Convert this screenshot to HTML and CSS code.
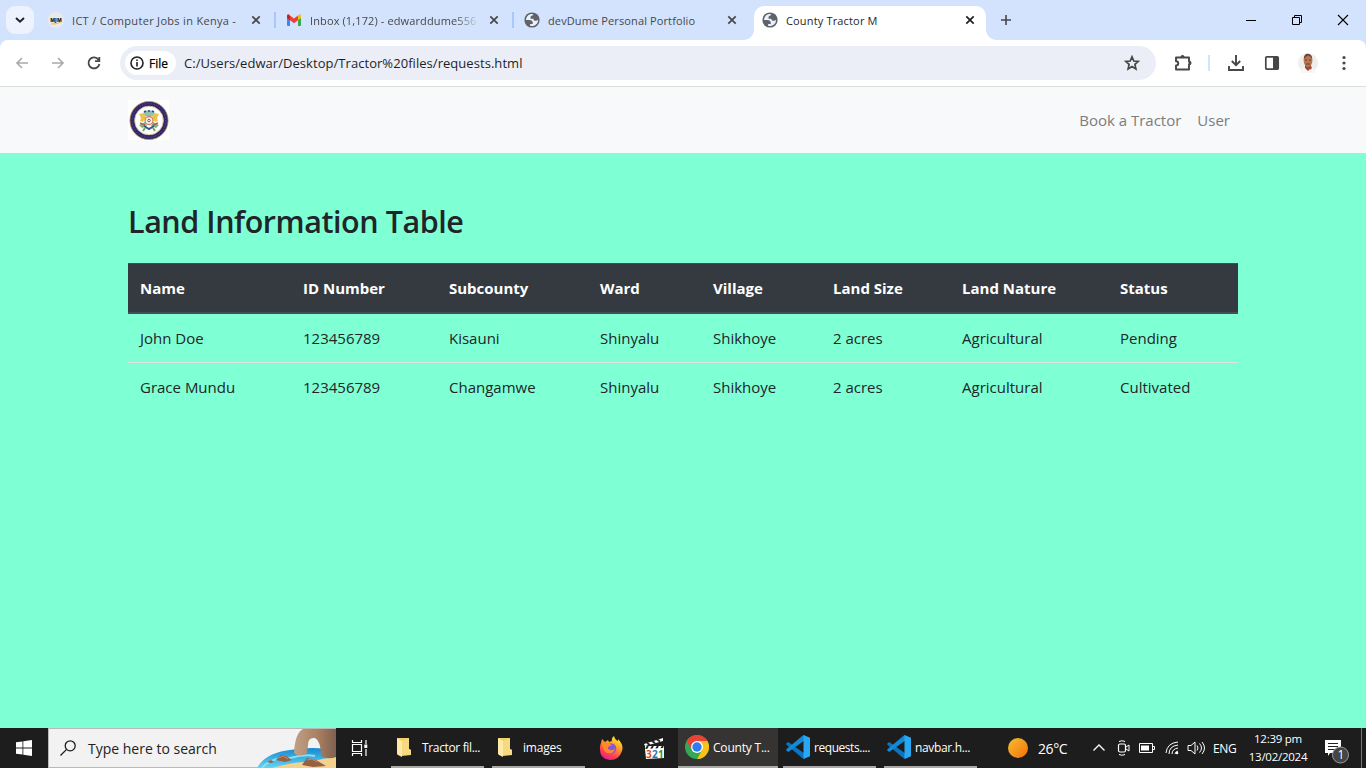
FILE: index.html
```
<!DOCTYPE html>
<html lang="en">
<head>
<meta charset="utf-8">
<title>County Tractor M</title>
<link rel="stylesheet" href="styles.css">
</head>
<body>
<svg class="defs" width="0" height="0">
  <defs>
    <symbol id="close" viewBox="0 0 10 10"><path d="M1.3 1.3l7.4 7.4M8.7 1.3L1.3 8.7" fill="none" stroke="currentColor" stroke-width="1.7"/></symbol>
    <symbol id="globe" viewBox="1.500 1.500 21 21"><circle cx="12" cy="12" r="10" fill="#5f6368"/><path d="M4 12h4.400c3.407.022 4.922 1.730 4.543 5.127H9.488v2.470a8.004 8.004 0 0 0 10.498-8.083C19.327 12.504 18.332 13 17 13c-2.137 0-3.206-.916-3.206-2.750h-3.748c-.274-2.728.683-4.092 2.870-4.092 0-.975.327-1.597.811-1.970A8.004 8.004 0 0 0 4 12z" fill="#e8f0fe"/></symbol>
    <symbol id="folder" viewBox="0 0 16 22"><path d="M1 2h12v11l2 1v5l-9 1z" fill="#f3cf6c"/><path d="M1 2l5 3v16l-4-2-1-1z" fill="#ffe9a6"/><path d="M6 5l7-3v11l2 1v5H6z" fill="#f7d97f"/></symbol>
    <symbol id="code" viewBox="0 0 24 24"><path d="M.3 8.600L2.200 7 18.500 18.500V24l-2-.7L.4 9.800z" fill="#0b74c2"/><path d="M.3 15.400L2.200 17 18.500 5.500V0l-2 .7L.4 14.200z" fill="#138ad8"/><path d="M17.500 0L24 2.800v18.400L17.500 24z" fill="#2aa7f3"/></symbol>
  </defs>
</svg>

<header class="tabs">
  <div class="search-tabs"><svg width="12" height="8" viewBox="0 0 12 8"><path d="M2 2l4 3.700L10 2" fill="none" stroke="#202124" stroke-width="2"/></svg></div>
  <div class="tab">
    <svg width="16" height="16" viewBox="0 0 16 16"><circle cx="8" cy="8" r="8" fill="#e9e9ea"/><text x="8" y="9.500" class="mjm">MJM</text><path d="M3 12q5 .5 10-2" stroke="#f2b455" fill="none"/></svg>
    <span class="title t1">ICT / Computer Jobs in Kenya -</span>
    <svg class="x" width="10" height="10"><use href="#close"/></svg>
  </div>
  <div class="tab split">
    <svg width="16" height="16" viewBox="0 0 16 16"><path d="M1 4h3v10H2q-1 0-1-1z" fill="#4285f4"/><path d="M12 4h3v9q0 1-1 1h-2z" fill="#34a853"/><path d="M12 3.500l1-1q2-.8 2 1.500v2l-3 2.300z" fill="#fbbc04"/><path d="M4 3.600l4 3 4-3v4.600l-4 3-4-3z" fill="#ea4335"/><path d="M1 6V4q0-2.300 2-1.500l1 1.100v4.600z" fill="#c5221f"/></svg>
    <span class="title t2">Inbox (1,172) - edwarddume556</span>
    <svg class="x" width="10" height="10"><use href="#close"/></svg>
  </div>
  <div class="tab split">
    <svg width="16" height="16"><use href="#globe"/></svg>
    <span class="title t3">devDume Personal Portfolio</span>
    <svg class="x" width="10" height="10"><use href="#close"/></svg>
  </div>
  <div class="tab active">
    <svg width="16" height="16"><use href="#globe"/></svg>
    <span class="title t4">County Tractor M</span>
    <svg class="x" width="10" height="10"><use href="#close"/></svg>
  </div>
  <svg class="plus" width="12" height="12" viewBox="0 0 12 12"><path d="M6 1v10M1 6h10" stroke="#474747" stroke-width="1.600"/></svg>
  <div class="win">
    <svg width="12" height="12" viewBox="0 0 12 12"><path d="M1 6.500h10" stroke="#000"/></svg>
    <svg width="12" height="12" viewBox="0 0 12 12"><path d="M1.500 3.500h7v7h-7zM3.500 3V1.500h7v7H9" fill="none" stroke="#000"/></svg>
    <svg width="12" height="12" viewBox="0 0 12 12"><path d="M1 1l10 10M11 1L1 11" stroke="#000" stroke-width="1.100"/></svg>
  </div>
</header>

<div class="toolbar">
  <svg class="tool" width="16" height="16" viewBox="0 0 16 16"><path d="M14 8H3M8 3L3 8l5 5" fill="none" stroke="#a9a9a9" stroke-width="1.600"/></svg>
  <svg class="tool" width="16" height="16" viewBox="0 0 16 16"><path d="M2 8h11M8 3l5 5-5 5" fill="none" stroke="#a9a9a9" stroke-width="1.600"/></svg>
  <svg class="tool" width="16" height="16" viewBox="0 0 16 16"><path d="M12.500 4.700A5.500 5.500 0 1 0 13.400 9M13.300 2v4.200H9" fill="none" stroke="#474747" stroke-width="1.800"/></svg>
  <div class="address">
    <div class="chip"><svg width="14" height="14" viewBox="0 0 14 14"><circle cx="7" cy="7" r="6" fill="none" stroke="#202124" stroke-width="1.600"/><path d="M7 6v4.500M7 3.500v1.600" stroke="#202124" stroke-width="1.600"/></svg><span>File</span></div>
    <span class="url">C:/Users/edwar/Desktop/Tractor%20files/requests.html</span>
    <svg class="star" width="16" height="16" viewBox="0 0 16 16"><path d="M8 1.800l1.800 4.200 4.500.4-3.400 3 1 4.500L8 11.500l-3.900 2.400 1-4.500-3.400-3 4.500-.4z" fill="none" stroke="#474747" stroke-width="1.700"/></svg>
  </div>
  <div class="actions">
    <svg width="18" height="18" viewBox="0 0 18 18"><path d="M2 3.500h13v4.200c2 0 2 2.600 0 2.600v5.200H2v-4c3 0 3-4.200 0-4.200z" fill="none" stroke="#474747" stroke-width="1.900" stroke-linejoin="round"/><path d="M6.500 3a2 2 0 0 1 4 0zM15 7c3 0 3 4 0 4z" fill="#474747"/></svg>
    <i class="bar"></i>
    <svg width="18" height="18" viewBox="0 0 18 18"><path d="M9 1v10M4.800 7L9 11.200 13.200 7M2 12v4h14v-4" fill="none" stroke="#474747" stroke-width="1.900"/></svg>
    <svg class="panel" width="16" height="16" viewBox="0 0 16 16"><rect x="1.800" y="1.800" width="12.400" height="12.400" rx="1" fill="none" stroke="#474747" stroke-width="1.700"/><path d="M9 2h5v12H9z" fill="#474747"/></svg>
    <svg class="avatar" width="20" height="20" viewBox="0 0 20 20"><circle cx="10" cy="10" r="10" fill="#eeeeed"/><path d="M2 20q1-5 6-6h4q5 1 6 6z" fill="#f8f7f5"/><path d="M7 11h6v4l-3 3-3-3z" fill="#8d5138"/><ellipse cx="10" cy="7.500" rx="4.400" ry="6.500" fill="#b87553"/><path d="M5.700 6Q6 .5 10 .7t4.300 5.300Q12 2 10 2.500T5.700 6z" fill="#6c4230"/><path d="M7 7h2m2 0h2M8 11h4" stroke="#694032"/><path d="M12 15l1-2 1 2-2 2z" fill="#d13e2b"/></svg>
    <svg class="menu" width="4" height="16" viewBox="0 0 4 16"><g fill="#474747"><circle cx="2" cy="2.500" r="1.600"/><circle cx="2" cy="8" r="1.600"/><circle cx="2" cy="13.500" r="1.600"/></g></svg>
  </div>
</div>

<nav class="navbar">
  <svg width="41" height="40" viewBox="0 0 41 40"><path d="M0 0h41v40H0z" fill="#fff"/><circle cx="21" cy="20.500" r="16.800" fill="none" stroke="#302a68" stroke-width="4.600"/><circle cx="21" cy="20.500" r="19.100" fill="none" stroke="#c2935f" stroke-width=".8"/><circle cx="21" cy="20.500" r="14.300" fill="none" stroke="#d0a77e" stroke-width=".7"/><circle cx="21" cy="20.500" r="16.900" fill="none" stroke="#5c5788" stroke-width="1" stroke-dasharray="1 2"/><path d="M15 13q6-6 12 0l-2 3h-8z" fill="#8cc4b0"/><path d="M16 12l2-1M20 11h2M24 11l2 1" stroke="#264d91" stroke-width="1.500"/><path d="M11 14l5-1 2 4-3 5-3-1 1-3zM31 14l-5-1-2 4 3 5 3-1-1-3z" fill="#efc24a"/><path d="M11 25l6-3 2 4-5 2zM31 25l-6-3-2 4 5 2z" fill="#7ab483"/><path d="M12 23l5 2M30 23l-5 2" stroke="#c66243" stroke-width="1.600"/><path d="M16 26l5 3 5-3" fill="none" stroke="#36568b" stroke-width="2"/><path d="M17 28l-2 3m10-3l2 3" stroke="#6da854" stroke-width="2"/><circle cx="21" cy="20.500" r="4" fill="#faf2e6" stroke="#c98268" stroke-width="1.300"/><circle cx="21" cy="20.500" r="1.300" fill="none" stroke="#a64f42"/></svg>
  <a class="book">Book a Tractor</a><a class="user">User</a>
</nav>

<main>
  <h2>Land Information Table</h2>
  <table>
    <colgroup><col class="c1"><col class="c2"><col class="c3"><col class="c4"><col class="c5"><col class="c6"><col class="c7"><col class="c8"></colgroup>
    <thead><tr><th>Name</th><th>ID Number</th><th>Subcounty</th><th>Ward</th><th>Village</th><th>Land Size</th><th>Land Nature</th><th>Status</th></tr></thead>
    <tbody>
      <tr><td>John Doe</td><td>123456789</td><td>Kisauni</td><td>Shinyalu</td><td>Shikhoye</td><td>2 acres</td><td>Agricultural</td><td>Pending</td></tr>
      <tr><td>Grace Mundu</td><td>123456789</td><td>Changamwe</td><td>Shinyalu</td><td>Shikhoye</td><td>2 acres</td><td>Agricultural</td><td>Cultivated</td></tr>
    </tbody>
  </table>
</main>

<footer class="taskbar">
  <div class="start"><svg width="16" height="16" viewBox="0 0 16 16"><path d="M0 2.300l6.500-.9v6.100H0zM7.300 1.200L16 0v7.500H7.300zM0 8.400h6.500v6.200L0 13.700zM7.300 8.400H16V16l-8.700-1.200z" fill="#fff"/></svg></div>
  <div class="search">
    <svg width="16" height="16" viewBox="0 0 16 16"><circle cx="10.200" cy="5.800" r="5" fill="none" stroke="#1c1c1c" stroke-width="1.300"/><path d="M6.600 9.400L.5 15.500" stroke="#1c1c1c" stroke-width="1.300"/></svg>
    <span>Type here to search</span>
    <svg class="beach" width="80" height="39" viewBox="0 0 80 39">
      <defs><linearGradient id="sea" x2="0" y2="1"><stop stop-color="#1688ce"/><stop offset="1" stop-color="#65d5f4"/></linearGradient><linearGradient id="rock"><stop stop-color="#c0a088"/><stop offset=".55" stop-color="#aa8163"/><stop offset="1" stop-color="#806050"/></linearGradient></defs>
      <path d="M1 39Q9 24 34 21q22-4 46 0v18z" fill="url(#sea)"/><path d="M6 39q9-11 28-10 14-4 25-2" stroke="#87dff6" stroke-width="2" fill="none"/>
      <path d="M16 39q24-7 37-6 16-4 27-5v11z" fill="#f3d28d"/><path d="M38 24Q39 4 47 0H80V28Q72 31 65 27Q65 12 59 9Q52 8 52 16L51 24Q44 29 38 24z" fill="url(#rock)"/>
      <path d="M20 31l5-5 5 1 6 4-7 2zM11 33l4-2 3 2-3 1zM46 36l5-7 9 2 10 6-13 1z" fill="#956044"/><path d="M23 29l4-2 5 3M51 31l5-1 5 3" stroke="#c18b66" fill="none"/>
    </svg>
  </div>
  <div class="view"><svg width="18" height="16" viewBox="0 0 18 16"><path d="M1.500 0v2.500h9V0M1.500 16v-2.500h9V16M1.500 4.500h9v7h-9zM15 0v4M15 9v7" fill="none" stroke="#fff" stroke-width="1.200"/><path d="M13.300 4.500h3v3.500h-3z" fill="#fff"/></svg></div>
  <div class="task folder"><svg width="16" height="22"><use href="#folder"/></svg><span class="l1">Tractor fil...</span></div>
  <div class="task folder second"><svg width="16" height="22"><use href="#folder"/></svg><span class="l2">images</span></div>
  <div class="firefox"><svg width="24" height="24" viewBox="0 0 24 24"><defs><linearGradient id="fire" x1=".8" x2=".3" y2="1"><stop stop-color="#fff33e"/><stop offset=".4" stop-color="#ff9b25"/><stop offset=".75" stop-color="#ff4055"/><stop offset="1" stop-color="#e51c91"/></linearGradient></defs><path d="M2 7l1-4 3 3 3-2 1 2 3-1Q12 2 15 0q1 4 4 5V3q6 6 4 12-3 9-12 9Q0 23 1 11q0-2 1-4z" fill="url(#fire)"/><circle cx="12" cy="12.500" r="5.300" fill="#8754dc"/><path d="M3 7q4-2 8 1l2 1-4 2q-1 2 2 3 3 1 5-2-1 7-8 5-4-2-5-10z" fill="#ff8b28"/></svg></div>
  <div class="clapper"><svg width="22" height="22" viewBox="0 0 22 22"><path d="M0 7L19 1v3L1 9zM1 9h19v4H1z" fill="#fff"/><path d="M3 6l3 2M8 4l3 2M13 2.500l3 2M4 9l-2 3M9 9l-2 3M14 9l-2 3M19 9l-2 3" stroke="#222" stroke-width="2"/><path d="M1 12l19-1v10L2 22z" fill="#fff"/><text x="2" y="20.500" fill="#d5532b">3</text><text x="8" y="20.500" fill="#2577bb">2</text><text x="14" y="20.500" fill="#37933d">1</text></svg></div>
  <div class="task chrome"><svg width="24" height="24" viewBox="0 0 24 24"><circle cx="12" cy="12" r="12" fill="#34a853"/><path d="M1.600 6A12 12 0 0 1 22.400 6H12L7 15z" fill="#ea4335"/><path d="M22.400 6A12 12 0 0 1 12 24l5.200-9L12 6z" fill="#fbc116"/><circle cx="12" cy="12" r="6" fill="#fff"/><circle cx="12" cy="12" r="4.700" fill="#2d7ded"/></svg><span class="l3">County T...</span></div>
  <div class="task code"><svg width="24" height="24"><use href="#code"/></svg><span class="l4">requests....</span></div>
  <div class="task code last"><svg width="24" height="24"><use href="#code"/></svg><span class="l5">navbar.h...</span></div>
  <div class="weather"><i></i><span>26°C</span></div>
  <div class="tray">
    <svg width="14" height="16" viewBox="0 0 14 16"><path d="M1.500 10.500L7 5l5.500 5.500" fill="none" stroke="#fff" stroke-width="1.300"/></svg>
    <svg class="meet" width="14" height="16" viewBox="0 0 14 16"><rect x="1.500" y="4" width="7" height="8" rx="1.500" fill="none" stroke="#fff" stroke-width="1.200"/><path d="M9 7l3-2v6L9 9M2 1.500q3-1.500 6 0M2 14.500q3 1.500 6 0" fill="none" stroke="#fff"/></svg>
    <svg width="16" height="16" viewBox="0 0 16 16"><path d="M.5 3.500h13v9H.5zM14 6.500h1.500v3H14" fill="none" stroke="#fff"/><path d="M2 5.500h8v5H2z" fill="#fff"/></svg>
    <svg width="14" height="16" viewBox="0 0 14 16"><path d="M1 13Q2 3 13 2M4 14q0-8 9-9M7 14q0-5 6-6M10 14q0-2 3-3" fill="none" stroke="#fff"/><circle cx="12" cy="13" r="1.300" fill="#fff"/></svg>
    <svg class="vol" width="18" height="16" viewBox="0 0 18 16"><path d="M1 5.500h3L8 2v12l-4-3.500H1zM10 5.500q2 2.500 0 5M12.500 3.500q4 4.500 0 9M15 2q5 6 0 12" fill="none" stroke="#fff"/></svg>
    <span class="eng">ENG</span>
  </div>
  <div class="clock"><span>12:39 pm</span><span>13/02/2024</span></div>
  <div class="notice"><svg width="26" height="26" viewBox="0 0 26 26"><path d="M1 1h16v13H6l-2 3v-3H1z" fill="#fff"/><path d="M4 4.500h10M4 7.500h10M4 10.500h7" stroke="#222"/><circle cx="16.500" cy="16" r="8" fill="#454545" stroke="#999"/><text x="13.500" y="20.200">1</text></svg></div>
</footer>
</body>
</html>
```
FILE: styles.css
```
* { box-sizing: border-box; }
body { margin: 0; width: 1366px; height: 768px; overflow: hidden; display: flex; flex-direction: column; background: #7fffd4; font-family: "Open Sans", "Noto Sans", sans-serif; color: #212529; white-space: nowrap; }
svg { flex: none; display: block; }
.defs { position: absolute; }

.tabs { height: 46px; margin-bottom: -6px; flex: none; display: flex; align-items: flex-start; background: #d3e3fd; font-size: 11px; color: #474747; }
.search-tabs { width: 28px; height: 28px; margin: 6px 6px 0; border-radius: 9px; background: #ecf2fe; display: grid; place-items: center; }
.tab { width: 238px; height: 40px; flex: none; display: flex; align-items: center; padding: 0 17px 0 8px; }
.title { margin-left: 8px; flex: 1; min-width: 0; overflow: hidden; line-height: 20px; padding-top: 1px; }
.tab .x { margin-left: 8px; }
.split { background: linear-gradient(#a8c7fa, #a8c7fa) 0 12px / 2px 16px no-repeat; width: 238px; padding-left: 12px; margin-left: -4px; padding-right: 13px; }
.split + .split { margin-left: 0; }
.split .x { margin-left: 9px; }
.t1 { letter-spacing: .31px; }
.t2 { letter-spacing: .12px; -webkit-mask-image: linear-gradient(90deg, #000 85%, transparent); mask-image: linear-gradient(90deg, #000 85%, transparent); }
.t3 { letter-spacing: .12px; }
.t4 { letter-spacing: .16px; }
.active { position: relative; width: 232px; height: 34px; margin: 6px 0 0 4px; background: #fff; border-radius: 10px 10px 0 0; padding-bottom: 6px; padding-right: 11px; color: #1f1f1f; }
.active::before, .active::after { content: ""; position: absolute; bottom: 0; width: 10px; height: 10px; }
.active::before { left: -10px; background: radial-gradient(circle at 0 0, transparent 9.5px, #fff 10px); }
.active::after { right: -10px; background: radial-gradient(circle at 100% 0, transparent 9.5px, #fff 10px); }
.plus { margin: 14px 0 0 14px; }
.win { margin: 14px 17px 0 auto; display: flex; gap: 34px; }

.toolbar { position: relative; height: 47px; flex: none; display: flex; align-items: center; background: #fff; border-bottom: 1px solid #dcdedb; border-radius: 8px 8px 0 0; padding-left: 14px; }
.tool { margin-right: 20px; }
.address { width: 1036px; height: 34px; margin-left: -2px; border-radius: 17px; background: #ebeef7; display: flex; align-items: center; padding: 0 16px 0 5px; }
.chip { width: 51px; height: 24px; border-radius: 12px; background: #fff; display: flex; align-items: center; gap: 5px; padding-left: 5px; font-size: 12px; color: #000; -webkit-text-stroke: .25px #000; }
.url { margin-left: 8px; font-size: 13px; color: #1f1f1f; letter-spacing: .05px; }
.star { margin-left: auto; }
.actions { flex: 1; display: flex; align-items: center; gap: 17px; padding-left: 18px; }
.bar { width: 2px; height: 16px; margin-left: -1px; background: #d3e3fd; }
.panel { margin-left: 2px; }
.avatar { margin-left: 1px; }
.menu { margin-left: 7px; }

.navbar { height: 66px; flex: none; display: flex; align-items: center; padding: 0 136px 0 128px; background: #f8f9fb; font-size: 15px; color: #7b7c7d; }
.book { margin-left: auto; margin-right: 16px; }

main { flex: 1; padding: 48px 128px 0; }
h2 { margin: 0 0 21px; font-size: 30.5px; line-height: 41px; font-weight: 600; letter-spacing: -.45px; }
table { width: 1110px; table-layout: fixed; border-collapse: separate; border-spacing: 0; font-size: 15px; }
th, td { padding: 0 12px; height: 49px; text-align: left; vertical-align: middle; }
th { height: 51px; color: #fff; font-weight: 700; background: #343a40; border-top: 1px solid #454d55; border-bottom: 2px solid #454d55; }
tbody tr:first-child td { height: 48px; }
tbody tr + tr td { border-top: 1px solid #dee2e6; }
.c1 { width: 163px; } .c2 { width: 146px; } .c3 { width: 151px; } .c4 { width: 113px; }
.c5 { width: 120px; } .c6 { width: 129px; } .c7 { width: 158px; } .c8 { width: 130px; }

.taskbar { height: 40px; flex: none; display: flex; background: #1d1d1d; color: #fff; font-size: 12px; }
.taskbar > div { flex: none; }
.start { width: 48px; display: grid; place-items: center; }
.search { width: 288px; background: #f2f2f2; border: 1px solid #b9b9b9; border-right: 0; display: flex; align-items: center; padding-left: 11px; color: #222; font-size: 14px; }
.search span { margin-left: 12px; }
.beach { margin-left: auto; }
.view { width: 55px; padding: 12px 0 0 15px; }
.task { width: 93px; display: flex; align-items: center; border-bottom: 2px solid #aaa9a8; }
.l1 { letter-spacing: -.35px; }
.l2, .l3 { letter-spacing: -.2px; }
.l4 { letter-spacing: -.45px; }
.l5 { letter-spacing: -.35px; }
.folder { padding-left: 5px; margin-right: 8px; }
.folder span { margin-left: 10px; }
.folder.second { margin-right: 14px; }
.firefox { width: 45px; padding-top: 8px; }
.clapper { width: 34px; padding-top: 9px; }
.clapper text { font: 700 10px "Open Sans", sans-serif; }
.chrome { width: 100px; background: #353433; padding-left: 7px; margin-right: 5px; }
.chrome span { margin-left: 4px; }
.code { padding-left: 3px; margin-right: 8px; }
.code span { margin-left: 4px; }
.code.last { margin-right: 31px; }
.weather { width: 84px; display: flex; align-items: center; font-size: 14px; letter-spacing: -.4px; }
.weather i { width: 20px; height: 20px; border-radius: 50%; margin-right: 10px; background: linear-gradient(135deg, #f4c02f, #f46f0e); }
.tray { width: 157px; display: flex; align-items: center; gap: 10px; }
.meet { margin-left: 1px; }
.tray .meet + svg { margin-left: -2px; }
.vol { margin-left: -2px; }
.tray .eng { margin-left: -2px; font-size: 12px; letter-spacing: -.3px; }
.clock { width: 58px; display: flex; flex-direction: column; align-items: center; padding-top: 2px; line-height: 18px; font-size: 11.5px; letter-spacing: -.25px; }
.notice { width: 38px; height: 40px; margin-left: 17px; padding-top: 11px; border-right: 1px solid #777; }
.notice text { font: 12px "Open Sans", sans-serif; fill: #fff; }
.mjm { font: 800 5px "Open Sans", sans-serif; text-anchor: middle; fill: #222; }
```
